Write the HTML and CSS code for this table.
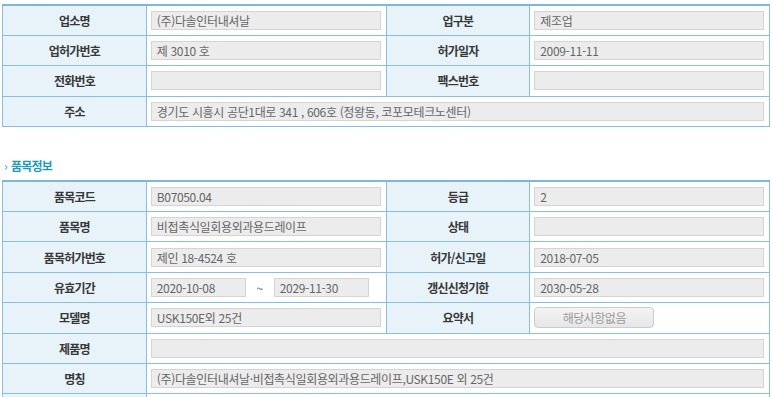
FILE: index.html
```html
<!DOCTYPE html>
<html lang="ko">
<head>
<meta charset="utf-8">
<link rel="stylesheet" href="styles.css">
</head>
<body>
<div class="page">
  <table class="info">
    <colgroup><col class="c-label"><col class="c-value"><col class="c-label"><col class="c-value"></colgroup>
    <tr>
      <th>업소명</th><td><span class="field">(주)다솔인터내셔날</span></td>
      <th>업구분</th><td><span class="field">제조업</span></td>
    </tr>
    <tr>
      <th>업허가번호</th><td><span class="field">제 3010 호</span></td>
      <th>허가일자</th><td><span class="field">2009-11-11</span></td>
    </tr>
    <tr>
      <th>전화번호</th><td><span class="field"></span></td>
      <th>팩스번호</th><td><span class="field"></span></td>
    </tr>
    <tr>
      <th>주소</th><td colspan="3"><span class="field">경기도 시흥시 공단1대로 341 , 606호 (정왕동, 코포모테크노센터)</span></td>
    </tr>
  </table>

  <h3 class="section-title"><span class="arrow">›</span>품목정보</h3>

  <table class="info">
    <colgroup><col class="c-label"><col class="c-value"><col class="c-label"><col class="c-value"></colgroup>
    <tr>
      <th>품목코드</th><td><span class="field">B07050.04</span></td>
      <th>등급</th><td><span class="field">2</span></td>
    </tr>
    <tr>
      <th>품목명</th><td><span class="field">비접촉식일회용외과용드레이프</span></td>
      <th>상태</th><td><span class="field"></span></td>
    </tr>
    <tr>
      <th>품목허가번호</th><td><span class="field">제인 18-4524 호</span></td>
      <th>허가/신고일</th><td><span class="field">2018-07-05</span></td>
    </tr>
    <tr>
      <th>유효기간</th>
      <td>
        <div class="range">
          <span class="field date">2020-10-08</span>
          <span class="tilde">~</span>
          <span class="field date">2029-11-30</span>
        </div>
      </td>
      <th>갱신신청기한</th><td><span class="field">2030-05-28</span></td>
    </tr>
    <tr>
      <th>모델명</th><td><span class="field">USK150E외 25건</span></td>
      <th>요약서</th><td><span class="btn">해당사항없음</span></td>
    </tr>
    <tr>
      <th>제품명</th><td colspan="3"><span class="field"></span></td>
    </tr>
    <tr>
      <th>명칭</th><td colspan="3"><span class="field">(주)다솔인터내셔날·비접촉식일회용외과용드레이프,USK150E 외 25건</span></td>
    </tr>
    <tr>
      <th></th><td colspan="3"><span class="field"></span></td>
    </tr>
  </table>
</div>
</body>
</html>
```

FILE: styles.css
```css
html, body {
  margin: 0;
  padding: 0;
  background: #ffffff;
}

body {
  font-family: "Noto Sans CJK KR", "Noto Sans", sans-serif;
  font-size: 12px;
  color: #333333;
  overflow: hidden;
}

.page {
  padding: 4px 3px 0 2px;
}

.info {
  width: 768px;
  border-collapse: collapse;
  table-layout: fixed;
  border-top: 2px solid #7db8d9;
}

.c-label { width: 18.75%; }
.c-value { width: 31.25%; }

.info tr {
  height: 30.4px;
}

.info th,
.info td {
  border: 1px solid #86bfdf;
  padding: 0;
  vertical-align: middle;
}

.info th {
  background: #e7f3f9;
  font-weight: bold;
  color: #383838;
  text-align: center;
  font-size: 12px;
  letter-spacing: -0.8px;
}

.info td {
  padding: 0 5px 0 4px;
  background: #ffffff;
}

.field {
  display: block;
  box-sizing: border-box;
  width: 100%;
  height: 19px;
  line-height: 17px;
  padding: 0 5px;
  border: 1px solid #d4d4d4;
  background: #ececec;
  color: #666666;
  font-size: 12px;
  letter-spacing: -0.35px;
  white-space: nowrap;
  overflow: hidden;
}

.range {
  display: flex;
  align-items: center;
}

.field.date {
  width: 95px;
  flex: none;
}

.tilde {
  width: 28px;
  text-align: center;
  color: #666666;
  font-size: 12px;
}

.btn {
  display: block;
  box-sizing: border-box;
  width: 120px;
  height: 21px;
  line-height: 19px;
  border: 1px solid #cccccc;
  border-radius: 4px;
  background: linear-gradient(#f4f4f4, #e6e6e6);
  color: #9a9a9a;
  text-align: center;
  font-size: 12px;
  letter-spacing: -0.5px;
}

.section-title {
  margin: 29px 0 4px 0;
  height: 20px;
  line-height: 20px;
  font-size: 12px;
  font-weight: bold;
  color: #1a9cb9;
  letter-spacing: -0.8px;
}

.section-title .arrow {
  display: inline-block;
  width: 7px;
  margin-left: 2px;
  font-weight: normal;
  color: #1a9cb9;
}
```
